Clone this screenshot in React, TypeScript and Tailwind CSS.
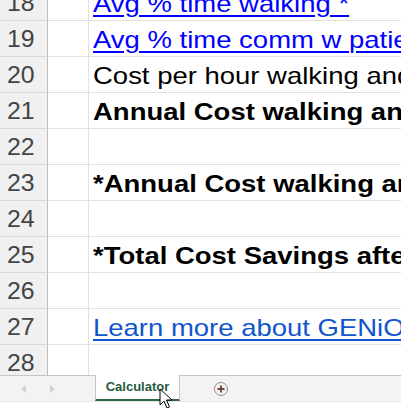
import React from 'react';

type Row = {
  n: number;
  text?: string;
  kind?: 'link' | 'plain' | 'bold' | 'link2';
};

const rows: Row[] = [
  { n: 18, text: 'Avg % time walking *', kind: 'link' },
  { n: 19, text: 'Avg % time comm w patients *', kind: 'link' },
  { n: 20, text: 'Cost per hour walking and communicating', kind: 'plain' },
  { n: 21, text: 'Annual Cost walking and communicating', kind: 'bold' },
  { n: 22 },
  { n: 23, text: '*Annual Cost walking and communicating', kind: 'bold' },
  { n: 24 },
  { n: 25, text: '*Total Cost Savings after GENiO', kind: 'bold' },
  { n: 26 },
  { n: 27, text: 'Learn more about GENiO', kind: 'link2' },
  { n: 28 },
];

const textCls: Record<string, string> = {
  link: 'text-[#0000ff] underline decoration-[2px] underline-offset-[3px]',
  link2: 'text-[#1155cc] underline decoration-[2px] underline-offset-[3px]',
  plain: 'text-black',
  bold: 'text-black font-bold',
};

export default function App() {
  return (
    <div
      className="w-[401px] h-[408px] overflow-hidden flex flex-col bg-white"
      style={{ fontFamily: '"Liberation Sans", Arial, sans-serif' }}
    >
      {/* GRID */}
      <div className="h-[375px] overflow-hidden">
        <div className="-mt-[15px]">
          {rows.map((r) => (
            <div key={r.n} className="flex h-[36px]">
              <div className="w-[48px] shrink-0 bg-[#f0f0f0] border-r border-r-[#bdbdbd] border-b border-b-[#d8d8d8] flex items-center justify-center pr-[5px] pt-[2px]">
                <span className="text-[23px] leading-none text-[#444444] scale-x-[1.08]">
                  {r.n}
                </span>
              </div>
              <div className="w-[41px] shrink-0 border-r border-b border-[#e1e1e1]" />
              <div className="flex-1 min-w-0 border-b border-[#e1e1e1] flex items-center pl-[4px] pt-[2px] overflow-hidden whitespace-nowrap">
                {r.text && (
                  <span
                    className={`inline-block origin-left scale-x-[1.145] text-[24px] leading-none ${textCls[r.kind || 'plain']}`}
                  >
                    {r.text}
                  </span>
                )}
              </div>
            </div>
          ))}
        </div>
      </div>

      {/* TAB BAR */}
      <div className="h-[26px] bg-[#f3f3f3] border-t border-[#c6c6c6] flex items-stretch relative">
        <div className="w-[95px] flex items-center">
          <svg width="8" height="10" viewBox="0 0 8 10" className="ml-[20px]">
            <path d="M6 1 L1 5 L6 9 Z" fill="#d6cfc8" />
          </svg>
          <svg width="8" height="10" viewBox="0 0 8 10" className="ml-[20px]">
            <path d="M2 1 L7 5 L2 9 Z" fill="#d6cfc8" />
          </svg>
        </div>
        <div className="w-[85px] -mt-px bg-white border-x border-[#c6c6c6] border-b-2 border-b-[#2e6a43] flex items-center justify-center text-[13px] font-bold text-[#245a3c]">
          Calculator
        </div>
        <div className="flex items-center pl-[33px]">
          <svg width="16" height="16" viewBox="0 0 16 16">
            <circle cx="8" cy="8" r="6.5" fill="none" stroke="#9a8a80" strokeWidth="1" />
            <path d="M8 4.5 V11.5 M4.5 8 H11.5" stroke="#6b4636" strokeWidth="1.8" />
          </svg>
        </div>
        {/* mouse cursor */}
        <svg
          width="14"
          height="22"
          viewBox="0 0 14 22"
          className="absolute left-[159px] top-[12px]"
        >
          <path
            d="M1 1 L1 17 L5 13 L8 20 L10.5 19 L7.5 12 L13 12 Z"
            fill="white"
            stroke="black"
            strokeWidth="1"
            strokeLinejoin="round"
          />
        </svg>
      </div>
      <div className="flex-1 bg-white border-t border-[#e6e6e6]" />
    </div>
  );
}
